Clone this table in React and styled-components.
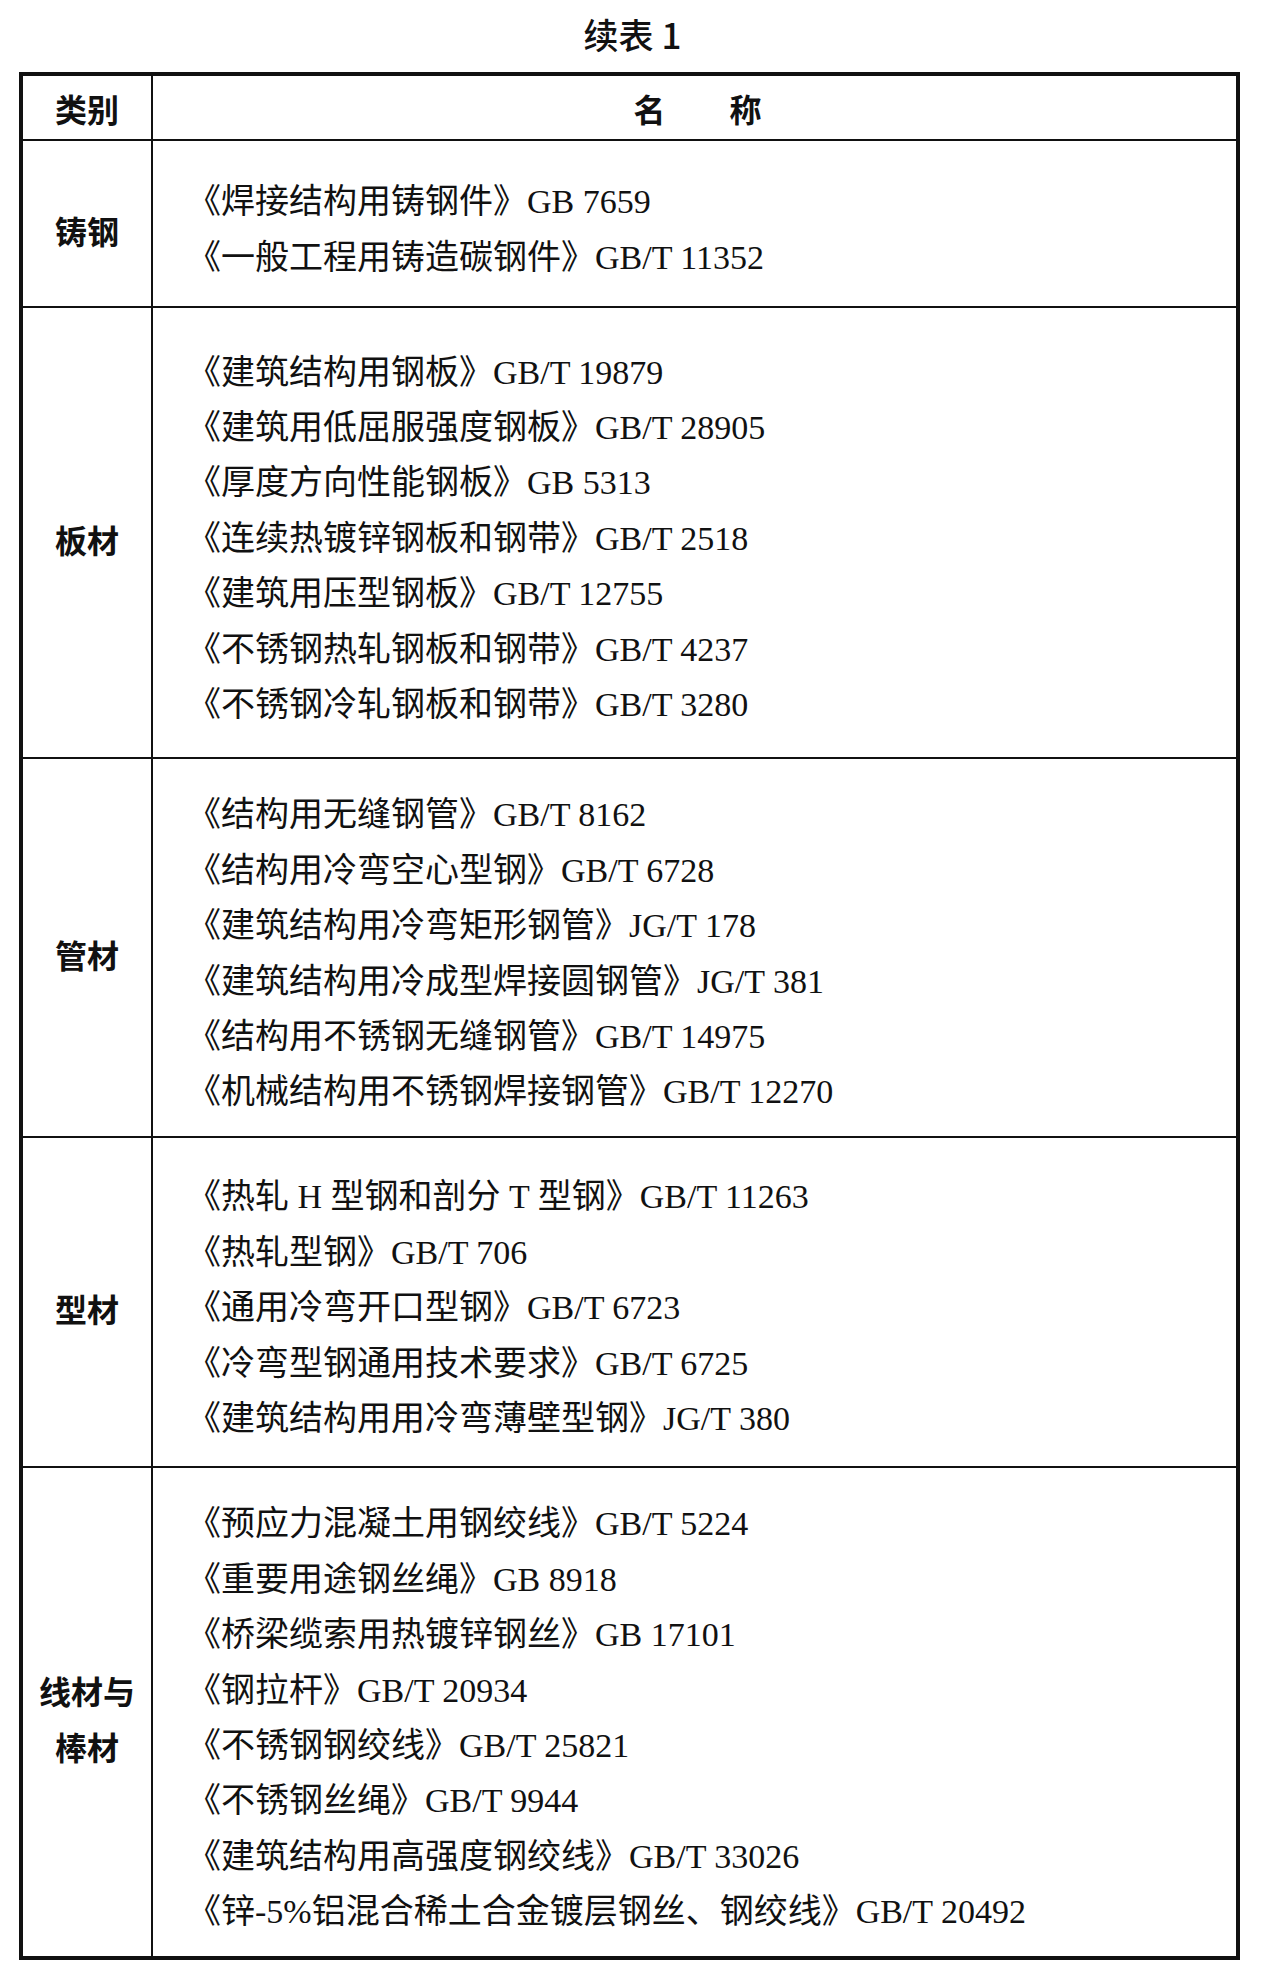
import styled, { createGlobalStyle } from 'styled-components'

const GlobalStyle = createGlobalStyle`
  html, body {
    margin: 0;
    padding: 0;
    background: #fff;
  }
  body {
    font-family: 'Liberation Serif', 'Noto Sans CJK SC', serif;
    color: #111;
  }
`

// 续表数据
const groups = [
  {
    cat: ['铸钢'],
    h: 167,
    items: ['《焊接结构用铸钢件》GB 7659', '《一般工程用铸造碳钢件》GB/T 11352'],
  },
  {
    cat: ['板材'],
    h: 451,
    items: [
      '《建筑结构用钢板》GB/T 19879',
      '《建筑用低屈服强度钢板》GB/T 28905',
      '《厚度方向性能钢板》GB 5313',
      '《连续热镀锌钢板和钢带》GB/T 2518',
      '《建筑用压型钢板》GB/T 12755',
      '《不锈钢热轧钢板和钢带》GB/T 4237',
      '《不锈钢冷轧钢板和钢带》GB/T 3280',
    ],
  },
  {
    cat: ['管材'],
    h: 379,
    items: [
      '《结构用无缝钢管》GB/T 8162',
      '《结构用冷弯空心型钢》GB/T 6728',
      '《建筑结构用冷弯矩形钢管》JG/T 178',
      '《建筑结构用冷成型焊接圆钢管》JG/T 381',
      '《结构用不锈钢无缝钢管》GB/T 14975',
      '《机械结构用不锈钢焊接钢管》GB/T 12270',
    ],
  },
  {
    cat: ['型材'],
    h: 330,
    items: [
      '《热轧 H 型钢和剖分 T 型钢》GB/T 11263',
      '《热轧型钢》GB/T 706',
      '《通用冷弯开口型钢》GB/T 6723',
      '《冷弯型钢通用技术要求》GB/T 6725',
      '《建筑结构用用冷弯薄壁型钢》JG/T 380',
    ],
  },
  {
    cat: ['线材与', '棒材'],
    h: 490,
    items: [
      '《预应力混凝土用钢绞线》GB/T 5224',
      '《重要用途钢丝绳》GB 8918',
      '《桥梁缆索用热镀锌钢丝》GB 17101',
      '《钢拉杆》GB/T 20934',
      '《不锈钢钢绞线》GB/T 25821',
      '《不锈钢丝绳》GB/T 9944',
      '《建筑结构用高强度钢绞线》GB/T 33026',
      '《锌-5%铝混合稀土合金镀层钢丝、钢绞线》GB/T 20492',
    ],
  },
]

const App = () => {
  return (
    <Page>
      <GlobalStyle />
      <Caption>续表 1</Caption>
      <Table>
        <Row $h={63} $head>
          <CatCell $head>类别</CatCell>
          <NameHead>名　　称</NameHead>
        </Row>
        {groups.map((g, index) => (
          <Row key={index} $h={g.h}>
            <CatCell>
              {g.cat.map((c) => (
                <div key={c}>{c}</div>
              ))}
            </CatCell>
            <NameCell>
              {g.items.map((item) => (
                <NameLine key={item}>{item}</NameLine>
              ))}
            </NameCell>
          </Row>
        ))}
      </Table>
    </Page>
  )
}

const Page = styled.div`
  width: 1265px;
  min-height: 1968px;
  box-sizing: border-box;
  padding-left: 19px;
  padding-right: 25px;
`

const Caption = styled.div`
  height: 72px;
  display: flex;
  align-items: center;
  justify-content: center;
  padding-left: 6px;
  padding-bottom: 6px;
  box-sizing: border-box;
  font-family: 'Noto Sans CJK SC', sans-serif;
  font-size: 35px;
  font-weight: 500;
  color: #111;
`

const Table = styled.div`
  border: 4px solid #111;
  display: flex;
  flex-direction: column;
`

const Row = styled.div`
  display: flex;
  height: ${(props) => props.$h}px;
  box-sizing: border-box;
  border-top: ${(props) => (props.$head ? 'none' : '2px solid #111')};
`

const CatCell = styled.div`
  width: 130px;
  flex-shrink: 0;
  border-right: 2px solid #111;
  display: flex;
  flex-direction: column;
  align-items: center;
  justify-content: center;
  padding-top: ${(props) => (props.$head ? '0' : '12px')};
  box-sizing: border-box;
  font-family: 'Noto Sans CJK SC', sans-serif;
  font-weight: 700;
  font-size: 32px;
  line-height: 56px;
`

const NameHead = styled.div`
  flex: 1;
  display: flex;
  align-items: center;
  justify-content: center;
  padding-left: 6px;
  font-family: 'Noto Sans CJK SC', sans-serif;
  font-weight: 700;
  font-size: 32px;
`

const NameCell = styled.div`
  flex: 1;
  display: flex;
  flex-direction: column;
  justify-content: center;
  padding-left: 34px;
  padding-top: 12px;
  box-sizing: border-box;
`

const NameLine = styled.div`
  font-size: 34px;
  line-height: 55.4px;
  white-space: nowrap;
`

export default App
